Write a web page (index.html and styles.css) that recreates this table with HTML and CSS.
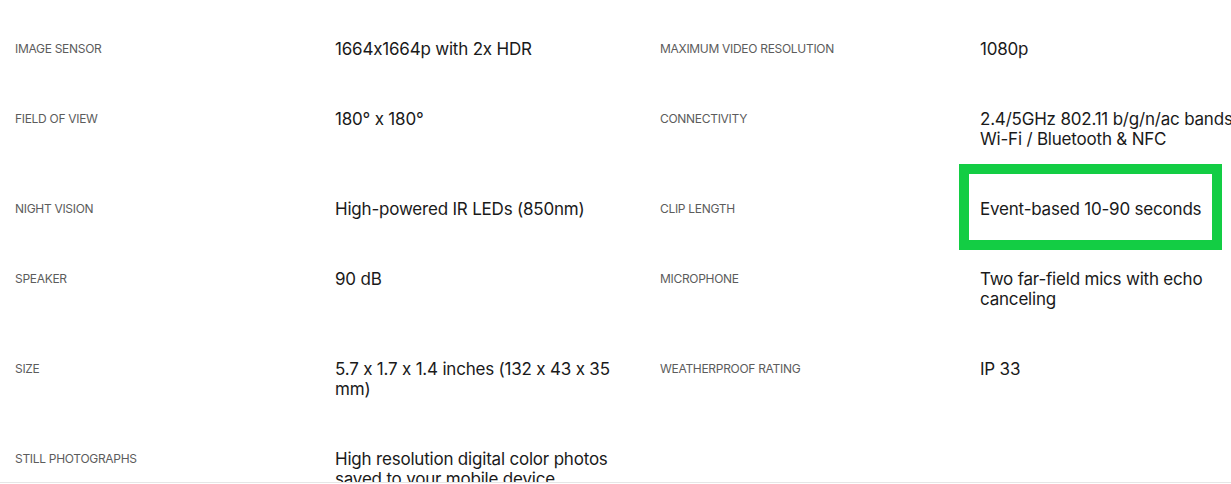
FILE: index.html
```html
<!DOCTYPE html>
<html lang="en">

<head>
    <meta charset="UTF-8">
    <title>Tech specs</title>
    <link rel="stylesheet" href="styles.css">
</head>

<body>
    <div class="specs">
        <div class="row">
            <div class="label">Image sensor</div>
            <div class="value">1664x1664p with 2x HDR</div>
            <div class="label">Maximum video resolution</div>
            <div class="value">1080p</div>
        </div>
        <div class="row">
            <div class="label">Field of view</div>
            <div class="value">180° x 180°</div>
            <div class="label">Connectivity</div>
            <div class="value">2.4/5GHz 802.11 b/g/n/ac bands Wi-Fi / Bluetooth &amp; NFC</div>
        </div>
        <div class="row">
            <div class="label">Night vision</div>
            <div class="value">High-powered IR LEDs (850nm)</div>
            <div class="label">Clip length</div>
            <div class="value marked">Event-based 10-90 seconds<span class="mark"></span></div>
        </div>
        <div class="row">
            <div class="label">Speaker</div>
            <div class="value">90 dB</div>
            <div class="label">Microphone</div>
            <div class="value">Two far-field mics with echo canceling</div>
        </div>
        <div class="row">
            <div class="label">Size</div>
            <div class="value">5.7 x 1.7 x 1.4 inches (132 x 43 x 35 mm)</div>
            <div class="label">Weatherproof rating</div>
            <div class="value">IP 33</div>
        </div>
        <div class="row">
            <div class="label">Still photographs</div>
            <div class="value">High resolution digital color photos saved to your mobile device</div>
            <div class="label"></div>
            <div class="value"></div>
        </div>
    </div>
    <div class="bottom"></div>
</body>

</html>
```

FILE: styles.css
```css
* {
    padding: 0;
    margin: 0;
    box-sizing: border-box;
}

body {
    background: #fff;
    font-family: Inter, "Noto Sans", sans-serif;
    overflow: hidden;
}

.specs {
    width: 1290px;
    padding: 14px 0 0 15px;
}

.row {
    display: grid;
    grid-template-columns: 320px 325px 320px 285px;
    padding: 25px 0;
}

.label {
    font-size: 12px;
    line-height: 20px;
    color: #5c5c5c;
    text-transform: uppercase;
    letter-spacing: -0.3px;
}

.value {
    max-width: 285px;
    font-size: 17px;
    line-height: 20px;
    color: #1a1a1a;
    letter-spacing: -0.2px;
}

.marked {
    position: relative;
}

.mark {
    position: absolute;
    left: -21px;
    top: -35px;
    width: 263px;
    height: 86px;
    border: 10px solid #13cd44;
}

.bottom {
    position: fixed;
    left: 0;
    right: 0;
    bottom: 0;
    height: 2px;
    background: #fff;
    border-top: 1px solid #e6e6e6;
}
```
